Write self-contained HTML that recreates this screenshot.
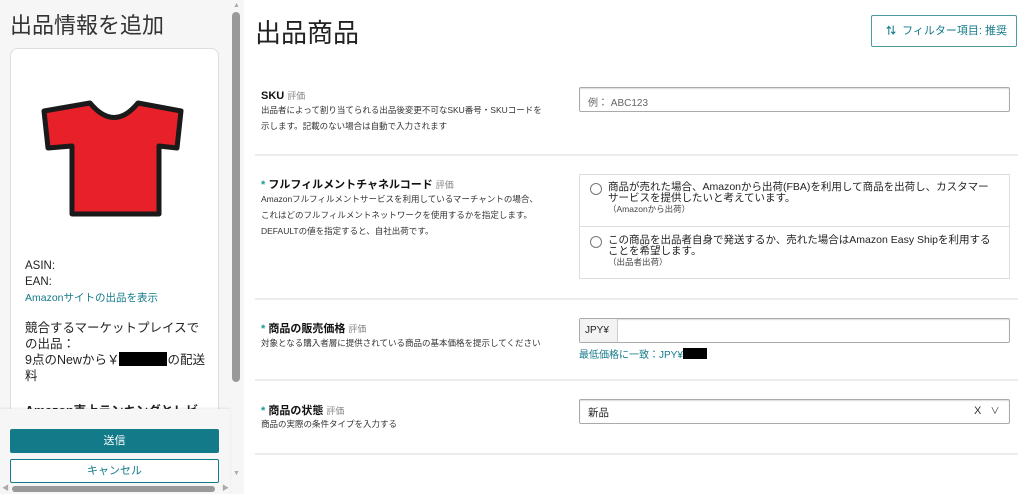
<!DOCTYPE html><html><head><meta charset="utf-8"><style>
*{box-sizing:border-box;margin:0;padding:0}
body{width:1024px;height:494px;overflow:hidden;background:#fff;font-family:"Liberation Sans","Noto Sans CJK JP",sans-serif;color:#222;position:relative}
.a{position:absolute}
.lbl{font-size:11px;font-weight:bold;color:#111}
.lbl small{font-size:9px;color:#888;font-weight:normal;margin-left:3px}
.lbl .s{color:#1a9a9a}
.d{font-size:8.5px;color:#333;line-height:16px}
.hr{position:absolute;left:255px;width:763px;height:2px;background:#ececec}
.inp{position:absolute;border:1px solid #aaa;border-radius:2px;background:#fff;box-shadow:inset 0 1px 1px #ddd}
.opt{font-size:10.5px;line-height:11px;color:#222}
.opt small{font-size:8.5px;color:#444}
.rad{position:absolute;width:12px;height:12px;border:1px solid #777;border-radius:50%}
</style></head><body>
<div class="a" style="left:0;top:0;width:244px;height:494px;background:#f6f6f6"></div>
<div class="a" style="left:10px;top:8px;font-size:22px;color:#333">出品情報を追加</div>
<div class="a" style="left:10px;top:48px;width:209px;height:380px;background:#fff;border:1px solid #ddd;border-radius:8px"></div>
<svg class="a" style="left:40px;top:100px" width="146" height="120" viewBox="40 100 146 120">
<path d="M44 111 L90 103 Q114 132 138 103 L181 111 L177 148 L159 146 L159 214 L72 214 L72 146 L48 148 Z" fill="#e8202a" stroke="#1a1a1a" stroke-width="5" stroke-linejoin="round"/></svg>
<div class="a" style="left:25px;top:258px;font-size:11.5px;line-height:16px;color:#222">ASIN:<br>EAN:<br><span style="color:#137a89;font-size:10.5px">Amazonサイトの出品を表示</span></div>
<div class="a" style="left:25px;top:320px;width:180px;font-size:12.5px;line-height:16px;color:#222">競合するマーケットプレイスでの出品：<br>9点のNewから￥<span style="display:inline-block;width:48px;height:14px;background:#000;vertical-align:-2px"></span>の配送料</div>
<div class="a" style="left:25px;top:400px;font-size:12.5px;font-weight:bold;color:#222">Amazon売上ランキングとレビ</div>
<div class="a" style="left:0;top:409px;width:230px;height:85px;background:#f6f6f6;box-shadow:0 -1px 2px rgba(0,0,0,0.08)"></div>
<div class="a" style="left:10px;top:429px;width:209px;height:24px;background:#137a89;border-radius:2px;color:#fff;font-size:11px;text-align:center;line-height:24px">送信</div>
<div class="a" style="left:10px;top:459px;width:209px;height:24px;background:#fff;border:1px solid #137a89;border-radius:2px;color:#137a89;font-size:11px;text-align:center;line-height:22px">キャンセル</div>
<div class="a" style="left:232px;top:12px;width:8px;height:370px;background:#999;border-radius:4px"></div>
<div class="a" style="left:233px;top:2px;font-size:7px;color:#aaa">▲</div>
<div class="a" style="left:233px;top:470px;font-size:7px;color:#aaa">▼</div>
<div class="a" style="left:12px;top:486px;width:203px;height:6px;background:#999;border-radius:3px"></div>
<div class="a" style="left:2px;top:483px;font-size:7px;color:#aaa">◀</div>
<div class="a" style="left:222px;top:483px;font-size:7px;color:#aaa">▶</div>

<div class="a" style="left:255px;top:13px;font-size:26px;color:#222">出品商品</div>
<div class="a" style="left:871px;top:15px;width:146px;height:32px;border:1px solid #4a9aa2;border-radius:2px;font-size:11px;color:#137a89;line-height:30px;padding-left:14px"><b style="font-size:10px">⇅</b>&nbsp; フィルター項目: 推奨</div>

<div class="a lbl" style="left:261px;top:89px">SKU<small>評価</small></div>
<div class="a d" style="left:261px;top:102px">出品者によって割り当てられる出品後変更不可なSKU番号・SKUコードを<br>示します。記載のない場合は自動で入力されます</div>
<div class="inp" style="left:579px;top:87px;width:431px;height:25px;font-size:10px;color:#666;padding:6px 8px">例： ABC123</div>
<div class="hr" style="top:154px"></div>

<div class="a lbl" style="left:261px;top:176px"><span class="s">*</span> フルフィルメントチャネルコード<small>評価</small></div>
<div class="a d" style="left:261px;top:191px">Amazonフルフィルメントサービスを利用しているマーチャントの場合、<br>これはどのフルフィルメントネットワークを使用するかを指定します。<br>DEFAULTの値を指定すると、自社出荷です。</div>
<div class="a" style="left:579px;top:174px;width:431px;height:105px;border:1px solid #ddd"></div>
<div class="a" style="left:579px;top:226px;width:431px;height:1px;background:#ddd"></div>
<div class="rad" style="left:590px;top:183px"></div>
<div class="a opt" style="left:608px;top:182px">商品が売れた場合、Amazonから出荷(FBA)を利用して商品を出荷し、カスタマー<br>サービスを提供したいと考えています。<br><small>（Amazonから出荷）</small></div>
<div class="rad" style="left:590px;top:236px"></div>
<div class="a opt" style="left:608px;top:235px">この商品を出品者自身で発送するか、売れた場合はAmazon Easy Shipを利用する<br>ことを希望します。<br><small>（出品者出荷）</small></div>
<div class="hr" style="top:298px"></div>

<div class="a lbl" style="left:261px;top:320px"><span class="s">*</span> 商品の販売価格<small>評価</small></div>
<div class="a d" style="left:261px;top:335px">対象となる購入者層に提供されている商品の基本価格を提示してください</div>
<div class="inp" style="left:579px;top:318px;width:431px;height:25px"></div>
<div class="a" style="left:580px;top:319px;width:38px;height:23px;background:#f3f3f3;border-right:1px solid #ccc;font-size:10px;line-height:23px;padding-left:5px">JPY¥</div>
<div class="a" style="left:579px;top:346px;font-size:10px;color:#137a89">最低価格に一致：JPY¥<span style="display:inline-block;width:24px;height:11px;background:#000;vertical-align:-1px"></span></div>
<div class="hr" style="top:379px"></div>

<div class="a lbl" style="left:261px;top:402px"><span class="s">*</span> 商品の状態<small>評価</small></div>
<div class="a d" style="left:261px;top:416px">商品の実際の条件タイプを入力する</div>
<div class="inp" style="left:579px;top:399px;width:431px;height:25px;font-size:10.5px;padding:5px 8px">新品</div>
<div class="a" style="left:974px;top:404px;font-size:11px;color:#333">X&nbsp;&nbsp; <span style="font-size:9px">∨</span></div>
<div class="hr" style="top:453px"></div>
</body></html>
